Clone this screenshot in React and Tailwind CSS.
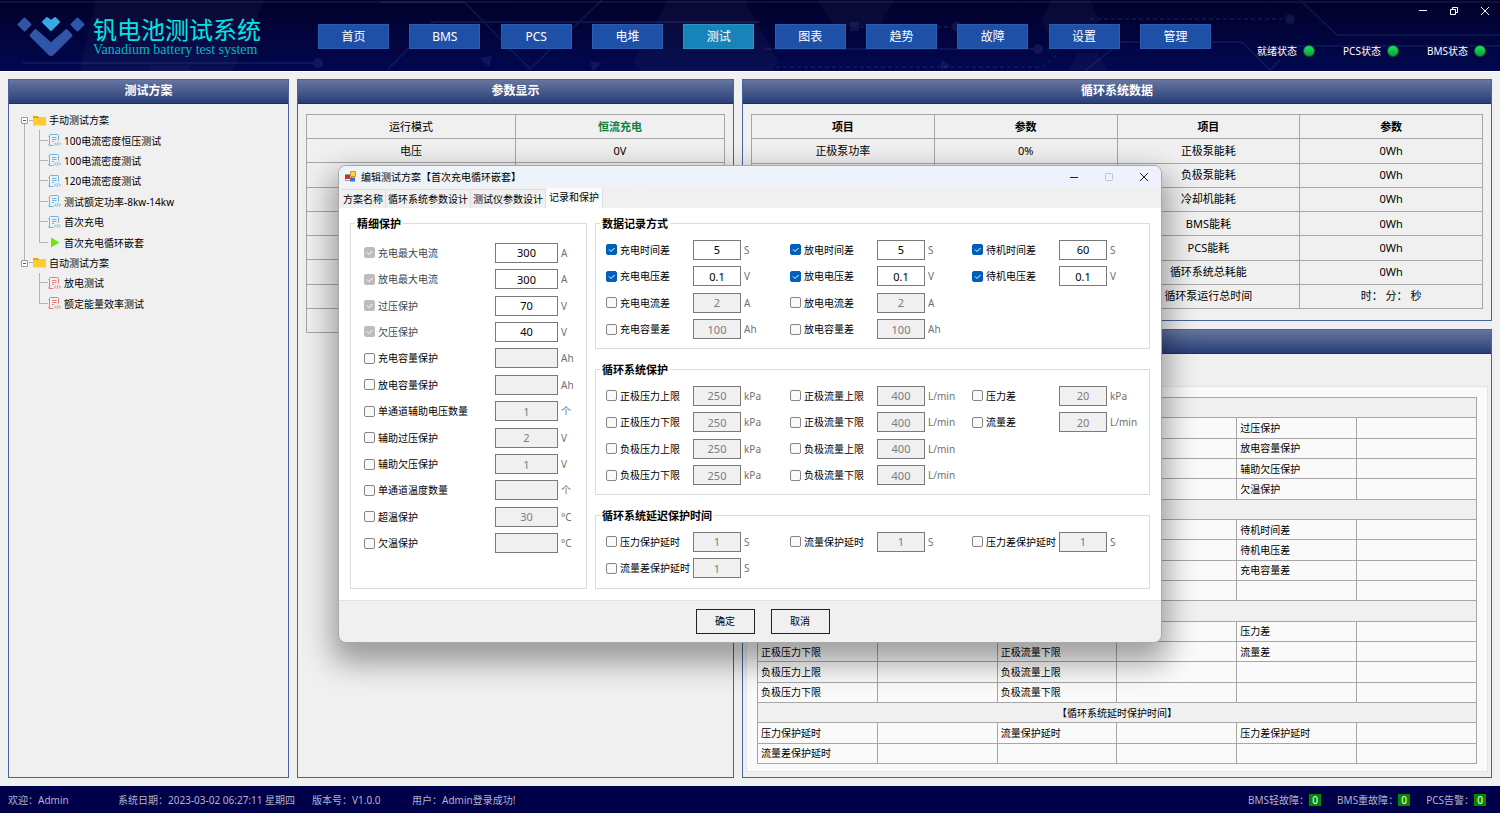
import clsx from "clsx";

const NAV = ["首页", "BMS", "PCS", "电堆", "测试", "图表", "趋势", "故障", "设置", "管理"];

const TREE = [
  { label: "手动测试方案", root: true },
  { label: "100电流密度恒压测试", icon: "blue", trunk: true },
  { label: "100电流密度测试", icon: "blue", trunk: true },
  { label: "120电流密度测试", icon: "blue", trunk: true },
  { label: "测试额定功率-8kw-14kw", icon: "blue", trunk: true },
  { label: "首次充电", icon: "blue", trunk: true },
  { label: "首次充电循环嵌套", icon: "play", trunk: true, last: true },
  { label: "自动测试方案", root: true, last: true },
  { label: "放电测试", icon: "red" },
  { label: "额定能量效率测试", icon: "red", last: true },
];

const CYCLE_ROWS = [
  ["正极泵功率", "0%", "正极泵能耗", "0Wh"],
  ["", "", "负极泵能耗", "0Wh"],
  ["", "", "冷却机能耗", "0Wh"],
  ["", "", "BMS能耗", "0Wh"],
  ["", "", "PCS能耗", "0Wh"],
  ["", "", "循环系统总耗能", "0Wh"],
  ["", "", "循环泵运行总时间", "时： 分： 秒"],
];

// a string is a full-width section row, an array gives the three label columns
const PLAN_ROWS = [
  "",
  ["", "", "过压保护"],
  ["", "", "放电容量保护"],
  ["", "", "辅助欠压保护"],
  ["", "", "欠温保护"],
  "",
  ["", "", "待机时间差"],
  ["", "", "待机电压差"],
  ["", "", "充电容量差"],
  ["", "", ""],
  "",
  ["", "", "压力差"],
  ["正极压力下限", "正极流量下限", "流量差"],
  ["负极压力上限", "负极流量上限", ""],
  ["负极压力下限", "负极流量下限", ""],
  "【循环系统延时保护时间】",
  ["压力保护延时", "流量保护延时", "压力差保护延时"],
  ["流量差保护延时", "", ""],
];

const FINE = [
  { name: "充电最大电流", value: "300", unit: "A", state: "locked" },
  { name: "放电最大电流", value: "300", unit: "A", state: "locked" },
  { name: "过压保护", value: "70", unit: "V", state: "locked" },
  { name: "欠压保护", value: "40", unit: "V", state: "locked" },
  { name: "充电容量保护", value: "", unit: "Ah" },
  { name: "放电容量保护", value: "", unit: "Ah" },
  { name: "单通道辅助电压数量", value: "1", unit: "个" },
  { name: "辅助过压保护", value: "2", unit: "V" },
  { name: "辅助欠压保护", value: "1", unit: "V" },
  { name: "单通道温度数量", value: "", unit: "个" },
  { name: "超温保护", value: "30", unit: "°C" },
  { name: "欠温保护", value: "", unit: "°C" },
];

const RECORD = [
  [
    { name: "充电时间差", value: "5", unit: "S", state: "on" },
    { name: "充电电压差", value: "0.1", unit: "V", state: "on" },
    { name: "充电电流差", value: "2", unit: "A" },
    { name: "充电容量差", value: "100", unit: "Ah" },
  ],
  [
    { name: "放电时间差", value: "5", unit: "S", state: "on" },
    { name: "放电电压差", value: "0.1", unit: "V", state: "on" },
    { name: "放电电流差", value: "2", unit: "A" },
    { name: "放电容量差", value: "100", unit: "Ah" },
  ],
  [
    { name: "待机时间差", value: "60", unit: "S", state: "on" },
    { name: "待机电压差", value: "0.1", unit: "V", state: "on" },
  ],
];

const SYSTEM = [
  [
    { name: "正极压力上限", value: "250", unit: "kPa" },
    { name: "正极压力下限", value: "250", unit: "kPa" },
    { name: "负极压力上限", value: "250", unit: "kPa" },
    { name: "负极压力下限", value: "250", unit: "kPa" },
  ],
  [
    { name: "正极流量上限", value: "400", unit: "L/min" },
    { name: "正极流量下限", value: "400", unit: "L/min" },
    { name: "负极流量上限", value: "400", unit: "L/min" },
    { name: "负极流量下限", value: "400", unit: "L/min" },
  ],
  [
    { name: "压力差", value: "20", unit: "kPa" },
    { name: "流量差", value: "20", unit: "L/min" },
  ],
];

const DELAY = [
  [
    { name: "压力保护延时", value: "1", unit: "S" },
    { name: "流量差保护延时", value: "1", unit: "S" },
  ],
  [{ name: "流量保护延时", value: "1", unit: "S" }],
  [{ name: "压力差保护延时", value: "1", unit: "S" }],
];

function HeaderPattern() {
  return (
    <svg className="absolute inset-0 h-full w-full" viewBox="0 0 1500 71" preserveAspectRatio="none" aria-hidden="true">
      <g fill="#fff" fillOpacity="0.03">
        <path d="M95 0h170L232 71H80z" />
        <path d="M668 0h77l33 62-6 9H640l-7-9z" />
        <path d="M818 0h76l-14 26h-46zM1052 0h38l9 20-10 20h-38l-10-20z" />
        <path d="M1078 53h20l10 17h-40zM152 66h36l3 5h-42z" />
      </g>
      <g fill="#5a6fc0" fillOpacity="0.16">
        <circle cx="318" cy="63" r="5" />
        <circle cx="1038" cy="49" r="5" />
        <circle cx="1290" cy="19" r="5" />
        <circle cx="957" cy="27" r="5" />
        <path d="M480 58l12-2-3 11zM590 61l12 2-9 8zM941 60l10 6-10 4zM850 22h9v9h-9z" />
      </g>
      <g fill="none" stroke="#5a6fc0" strokeOpacity="0.14" strokeWidth="2">
        <path d="M23 63h290M380 2h84l66 67 72-69M430 22h330M388 69l46-47M765 49h268M1085 71l36-29h30M1211 42h31l28 28 10-10" />
        <path d="M1300 0l37 35h163M1280 46h220M0 2h1500" />
        <path d="M776 67h267l16-14M1090 19h195M860 27h92" strokeDasharray="4 3" />
      </g>
    </svg>
  );
}

function Logo() {
  return (
    <svg width="68" height="41" viewBox="0 0 68 41" aria-hidden="true">
      <g fill="#3155a8" stroke="#3155a8" strokeWidth="2" strokeLinejoin="round">
        <path d="M7.500 2.500l6 6-6 6-6-6z" />
        <path d="M60.500 2.500l6 6-6 6-6-6z" />
        <path d="M18.500 14l15.500 13.500L49.500 14l5 5.500L36 38q-2 2-4 0L13.500 19.500z" />
      </g>
      <path d="M26 6l4-4 4 3 4-3 4 4-8 8z" fill="#35a9e8" stroke="#35a9e8" strokeWidth="2" strokeLinejoin="round" />
    </svg>
  );
}

function Lamp({ label }) {
  return (
    <div className="flex items-center gap-1.5">
      <span>{label}</span>
      <span className="size-3 rounded-full border border-[#0d5c26] bg-linear-to-b from-[#17e85c] to-[#0f9a3c]" />
    </div>
  );
}

function TopBar() {
  return (
    <header className="relative h-[71px] bg-linear-to-b from-[#02022a] to-[#00084f] text-white">
      <HeaderPattern />
      <div className="relative flex h-full">
        <div className="flex w-[318px] shrink-0 items-center gap-2 pt-0.5 pl-[17px]">
          <Logo />
          <div className="pt-0.5">
            <h1 className="text-2xl leading-6 whitespace-nowrap text-[#00e6e6]">钒电池测试系统</h1>
            <p className="font-['Liberation_Serif',serif] text-sm leading-4 whitespace-nowrap text-[#00b8c4]">
              Vanadium battery test system
            </p>
          </div>
        </div>
        <nav className="flex w-[893px] items-center justify-between pt-0.5">
          {NAV.map((item) => (
            <button
              key={item}
              type="button"
              className={clsx(
                "h-[25px] w-[71px] border text-xs",
                item === "测试" ? "border-[#2a94c4] bg-[#1684b8]" : "border-[#2a5cb0] bg-[#1e50a8]",
              )}
            >
              {item}
            </button>
          ))}
        </nav>
        <div className="flex flex-1 flex-col items-end justify-between pr-3.5 pb-3">
          <div className="-mr-1.5 flex gap-[17px] pt-1">
            <button type="button" aria-label="最小化" className="size-3.5">
              <svg viewBox="0 0 14 14" stroke="#fff" fill="none"><path d="M3 6.500h8" /></svg>
            </button>
            <button type="button" aria-label="还原" className="size-3.5">
              <svg viewBox="0 0 14 14" stroke="#fff" fill="none">
                <path d="M3.500 5.500h5v5h-5zM5.500 5.500v-2h5v5h-2" />
              </svg>
            </button>
            <button type="button" aria-label="关闭" className="size-3.5">
              <svg viewBox="0 0 14 14" stroke="#fff" fill="none"><path d="M3 3l8 8M11 3l-8 8" /></svg>
            </button>
          </div>
          <div className="flex gap-7 text-[10px] leading-4 whitespace-nowrap">
            <Lamp label="就绪状态" />
            <Lamp label="PCS状态" />
            <Lamp label="BMS状态" />
          </div>
        </div>
      </div>
    </header>
  );
}

function Panel({ title, className, children }) {
  return (
    <section className={clsx("flex flex-col border border-[#4a6199] bg-[#f0f0f0]", className)}>
      <h2 className="h-6 border-b border-[#1c2f6b] bg-linear-to-b from-[#67759f] to-[#283f77] text-center text-xs leading-[22px] font-bold text-white">
        {title}
      </h2>
      {children}
    </section>
  );
}

function DocIcon({ color }) {
  return (
    <svg
      width="13"
      height="13"
      viewBox="0 0 13 13"
      fill="none"
      strokeWidth="1"
      className={color === "red" ? "stroke-[#e0807c]" : "stroke-[#6db4e0]"}
      aria-hidden="true"
    >
      <path d="M5.500 11.500H1.500q-1 0-1-1M10.500 6.500V1.500q0-1-1-1h-7q-1 0-1 1v10M.5 2.500h1" />
      <path d="M4 3.500h4.500M4 5.500h4.500M4 7.500h2" />
      <path d="M8 8.500L6.500 10 8 11.500M11 8.500l1.500 1.500-1.500 1.500M10 8.500l-1 3" />
    </svg>
  );
}

function TreeIcon({ icon }) {
  if (icon === "play") {
    return (
      <svg width="13" height="13" viewBox="0 0 13 13" aria-hidden="true">
        <path d="M3 1.500l8.500 5-8.500 5z" fill="#6fe80c" />
      </svg>
    );
  }
  return <DocIcon color={icon} />;
}

function TreeRow({ node, first }) {
  if (node.root) {
    return (
      <li className="flex items-center pl-[11px]">
        <span className="flex w-[9px] flex-col items-center self-stretch">
          <span className={clsx("w-px flex-1", !first && "bg-[#b4b4b4]")} />
          <button
            type="button"
            aria-label="折叠"
            className="flex size-[7px] shrink-0 items-center justify-center rounded-[1px] border border-[#9a9a9a] bg-white"
          >
            <span className="h-px w-[3px] bg-[#3c5ea8]" />
          </button>
          <span className={clsx("w-px flex-1", !node.last && "bg-[#b4b4b4]")} />
        </span>
        <span className="h-px w-1 bg-[#b4b4b4]" />
        <svg width="13" height="11" viewBox="0 0 13 11" aria-hidden="true">
          <path d="M0 1h5l1 1.500h7V4H0z" fill="#f0a000" />
          <path d="M0 3h13v7.500H0z" fill="#ffcb2e" />
        </svg>
        <span className="pl-[3px]">{node.label}</span>
      </li>
    );
  }
  return (
    <li className="flex items-center pl-[15px]">
      <span className={clsx("w-[15px] self-stretch", node.trunk && "border-l border-[#b4b4b4]")} />
      <span className="grid w-[9px] grid-rows-2 self-stretch">
        <span className="border-b border-l border-[#b4b4b4]" />
        <span className={clsx(!node.last && "border-l border-[#b4b4b4]")} />
      </span>
      <TreeIcon icon={node.icon} />
      <span className="pl-[3px]">{node.label}</span>
    </li>
  );
}

function ParamTable() {
  const cell = "border border-[#a6a6a6] p-0";
  return (
    <div className="px-2 pt-2.5">
      <table className="h-[219px] w-full table-fixed border-collapse text-center text-[11px] leading-4">
        <tbody>
          <tr className="h-6">
            <td className={cell}>运行模式</td>
            <td className={clsx(cell, "font-bold text-[#12813f]")}>恒流充电</td>
          </tr>
          <tr className="h-6">
            <td className={cell}>电压</td>
            <td className={cell}>0V</td>
          </tr>
          {[3, 4, 5, 6, 7, 8, 9].map((row) => (
            <tr key={row} className="h-6">
              <td className={cell} />
              <td className={cell} />
            </tr>
          ))}
        </tbody>
      </table>
    </div>
  );
}

function CycleTable() {
  return (
    <div className="px-2 pt-2.5 pb-[11px]">
      <table className="h-[195px] w-full table-fixed border-collapse text-center text-[11px] leading-4">
        <tbody>
          <tr className="h-6">
            {["项目", "参数", "项目", "参数"].map((head, i) => (
              <th key={i} scope="col" className="border border-[#a6a6a6] p-0 font-bold">{head}</th>
            ))}
          </tr>
          {CYCLE_ROWS.map((row, i) => (
            <tr key={i} className="h-6">
              {row.map((text, j) => (
                <td key={j} className="border border-[#a6a6a6] p-0 whitespace-pre">{text}</td>
              ))}
            </tr>
          ))}
        </tbody>
      </table>
    </div>
  );
}

function PlanTable() {
  return (
    <table className="h-[367px] w-full table-fixed border-collapse text-[10px] leading-4">
      <colgroup>
        {[1, 2, 3, 4, 5, 6].map((col) => (
          <col key={col} />
        ))}
      </colgroup>
      <tbody>
        {PLAN_ROWS.map((row, i) =>
          typeof row === "string" ? (
            <tr key={i} className="h-5 bg-[#f0f0f0] text-center">
              <td colSpan={6} className="border border-[#a6a6a6] p-0">{row}</td>
            </tr>
          ) : (
            <tr key={i} className="h-5">
              {row.flatMap((label, j) => [
                <td key={`${j}-name`} className="border border-[#a6a6a6] p-0 pl-[3px]">{label}</td>,
                <td key={`${j}-value`} className="border border-[#a6a6a6] p-0" />,
              ])}
            </tr>
          ),
        )}
      </tbody>
    </table>
  );
}

function Field({ field, wide }) {
  const locked = field.state === "locked";
  const checked = locked || field.state === "on";
  return (
    <div className="flex items-center">
      <label className={clsx("flex items-center gap-[3px] whitespace-nowrap", wide ? "w-[131px]" : "w-[87px]", locked && "text-[#444]")}>
        <span className="grid">
          <input
            type="checkbox"
            defaultChecked={checked}
            disabled={locked}
            className="peer col-start-1 row-start-1 size-[11px] appearance-none rounded-[2px] border border-[#858585] bg-[#fafafa] checked:border-[#005fb8] checked:bg-[#005fb8] disabled:border-[#bdbdbd] disabled:bg-[#bdbdbd]"
          />
          <svg
            viewBox="0 0 11 11"
            className="pointer-events-none invisible col-start-1 row-start-1 size-[11px] fill-none stroke-white peer-checked:visible"
          >
            <path d="M3 5.500l2 2 3.500-3.500" />
          </svg>
        </span>
        {field.name}
      </label>
      <input
        type="text"
        aria-label={field.name}
        defaultValue={field.value}
        disabled={!checked}
        className={clsx(
          "h-5 border border-[#7a7a7a] bg-white text-center text-[11px] leading-4 disabled:bg-[#f0f0f0] disabled:text-[#7d7d7d]",
          wide ? "w-[63px]" : "w-12",
        )}
      />
      <span className="pl-[3px] text-[#707070]">{field.unit}</span>
    </div>
  );
}

function Group({ title, className, children }) {
  return (
    <fieldset className={clsx("border border-[#dcdcdc]", className)}>
      <legend className="ml-1 px-0.5 text-[11px] leading-4 font-bold">{title}</legend>
      {children}
    </fieldset>
  );
}

function FieldColumns({ columns, rows }) {
  return (
    <div className={clsx("grid grid-cols-[184px_182px_1fr] pt-[5px] pb-[5px] pl-2.5", rows === 4 ? "h-[116px]" : "h-[63px]")}>
      {columns.map((fields, i) => (
        <div key={i} className={clsx("grid", rows === 4 ? "grid-rows-4" : "grid-rows-2")}>
          {fields.map((field) => (
            <Field key={field.name} field={field} />
          ))}
        </div>
      ))}
    </div>
  );
}

function EditDialog() {
  return (
    <div
      role="dialog"
      aria-label="编辑测试方案"
      className="w-[824px] overflow-hidden rounded-lg border border-[#a8a8a8] bg-[#f0f0f0] text-[10px] leading-4 shadow-[0_14px_30px_6px_rgba(0,0,0,0.36)]"
    >
      <div className="flex h-[22px] items-center bg-linear-to-r from-[#edf3f7] to-[#eff2fc] pr-2.5 pl-1.5">
        <svg width="11" height="11" viewBox="0 0 11 11" aria-hidden="true">
          <path d="M.5 3.500h6v6h-6z" fill="#fff" stroke="#999" />
          <path d="M0 4h5v4H0z" fill="#c8321e" />
          <path d="M5.500.5h5v5h-5z" fill="#ffd24a" stroke="#d09a10" />
          <path d="M5 6.500h5v4H5z" fill="#3a6fd8" />
        </svg>
        <h3 className="flex-1 pl-[5px]">编辑测试方案【首次充电循环嵌套】</h3>
        <div className="flex gap-[21px]">
          <button type="button" aria-label="最小化" className="size-3.5">
            <svg viewBox="0 0 14 14" stroke="#222" fill="none"><path d="M3 7.500h8" /></svg>
          </button>
          <button type="button" aria-label="最大化" disabled className="size-3.5">
            <svg viewBox="0 0 14 14" stroke="#c4c4c4" fill="none"><rect x="3.500" y="3.500" width="7" height="7" rx="1" /></svg>
          </button>
          <button type="button" aria-label="关闭" className="size-3.5">
            <svg viewBox="0 0 14 14" stroke="#222" fill="none"><path d="M3 3l8 8M11 3l-8 8" /></svg>
          </button>
        </div>
      </div>

      <div role="tablist" className="flex h-5 items-end pl-0.5">
        {["方案名称", "循环系统参数设计", "测试仪参数设计"].map((tab) => (
          <button
            key={tab}
            type="button"
            role="tab"
            className="h-[19px] border-t border-r border-[#dedede] bg-[#f0f0f0] px-0.5"
          >
            {tab}
          </button>
        ))}
        <button type="button" role="tab" aria-selected="true" className="h-5 border-r border-[#dedede] bg-[#fbfbfb] px-[3px] pb-0.5">
          记录和保护
        </button>
      </div>

      <div className="flex gap-2 border-b border-[#e2e2e2] bg-white px-[11px] pt-2 pb-[11px]">
        <Group title="精细保护" className="w-[237px] pb-[31px]">
          <div className="grid h-[325px] grid-rows-12 pt-2 pl-[13px]">
            {FINE.map((field) => (
              <Field key={field.name} field={field} wide />
            ))}
          </div>
        </Group>
        <div className="flex flex-1 flex-col gap-[13px]">
          <Group title="数据记录方式">
            <FieldColumns columns={RECORD} rows={4} />
          </Group>
          <Group title="循环系统保护">
            <FieldColumns columns={SYSTEM} rows={4} />
          </Group>
          <Group title="循环系统延迟保护时间" className="flex-1">
            <FieldColumns columns={DELAY} rows={2} />
          </Group>
        </div>
      </div>

      <div className="flex justify-center gap-4 pt-2 pb-2 pl-[25px]">
        <button type="button" className="h-[25px] w-[59px] border border-[#222]">确定</button>
        <button type="button" className="h-[25px] w-[59px] border border-[#222]">取消</button>
      </div>
    </div>
  );
}

function Alarm({ label }) {
  return (
    <span className="flex items-center">
      {label}：<span className="w-3 bg-[#008a00] text-center leading-3 text-white">0</span>
    </span>
  );
}

export default function App() {
  return (
    <div className="relative flex min-h-screen flex-col bg-[#f0f0f0] font-['Noto_Sans','Noto_Sans_CJK_SC',sans-serif] text-black">
      <TopBar />

      <main className="grid flex-1 grid-cols-[281px_437fr_750fr] gap-2 border-t border-white px-2 pt-[7px] pb-2">
        <Panel title="测试方案">
          <ul className="mt-1.5 grid h-[204px] grid-rows-10 text-[10px] leading-4">
            {TREE.map((node, i) => (
              <TreeRow key={node.label} node={node} first={i === 0} />
            ))}
          </ul>
        </Panel>

        <Panel title="参数显示">
          <ParamTable />
        </Panel>

        <div className="flex flex-col gap-2">
          <Panel title="循环系统数据">
            <CycleTable />
          </Panel>
          <Panel className="flex-1">
            <div className="mx-[3px] mt-8 mb-[5px] flex-1 border border-[#e4e4e4] bg-[#fafafa] px-2.5 pt-2.5 pb-1">
              <PlanTable />
            </div>
          </Panel>
        </div>
      </main>

      <footer className="flex h-[27px] items-center bg-[#00004a] pr-3.5 pl-2 text-[10px] leading-4 whitespace-nowrap text-[#b4b4c8]">
        <span className="w-[110px]">欢迎：Admin</span>
        <span className="w-[194px]">系统日期：2023-03-02 06:27:11 星期四</span>
        <span className="w-[100px]">版本号：V1.0.0</span>
        <span className="flex-1">用户：Admin登录成功!</span>
        <div className="flex gap-4">
          <Alarm label="BMS轻故障" />
          <Alarm label="BMS重故障" />
          <Alarm label="PCS告警" />
        </div>
      </footer>

      <div className="absolute inset-0 flex items-center justify-center pb-1.5">
        <EditDialog />
      </div>
    </div>
  );
}
